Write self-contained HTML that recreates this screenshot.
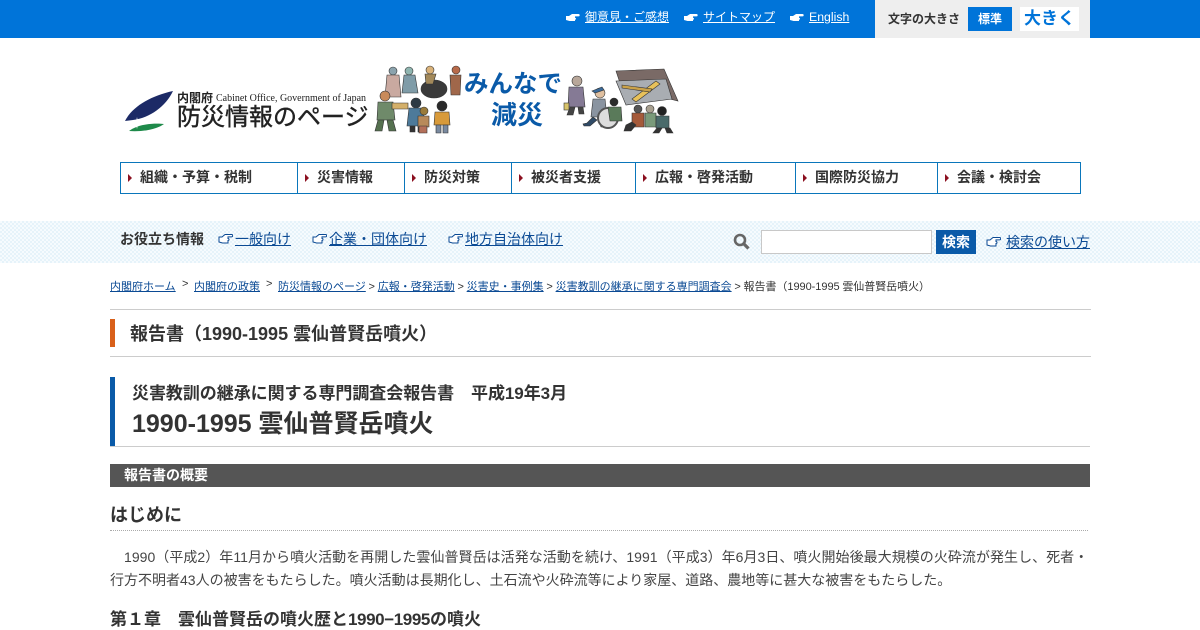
<!DOCTYPE html>
<html lang="ja"><head><meta charset="utf-8"><title>報告書（1990-1995 雲仙普賢岳噴火）</title>
<style>
html,body{margin:0;padding:0;background:#fff}
body{width:1200px;height:630px;overflow:hidden;position:relative;font-family:"Liberation Sans","Noto Sans CJK JP",sans-serif;color:#333}
.a{position:absolute;white-space:nowrap}
a{color:#0b4a94;text-decoration:underline}
.top a{color:#fff;font-size:12px}
.nav{position:absolute;left:120px;top:162px;width:961px;height:32px;box-sizing:border-box;border:1px solid #0a76bb}
.nav div{position:absolute;top:0;height:30px;border-right:1px solid #0a76bb}
.bc{font-size:11px;top:278px;color:#333}
.bc a{color:#0b4a94}
.n{position:absolute;top:169px;font-size:14px;font-weight:bold;color:#333;white-space:nowrap;line-height:17px}
.t{position:absolute;top:174px;width:0;height:0;border-left:4px solid #8c1020;border-top:4px solid transparent;border-bottom:4px solid transparent}
</style></head><body>
<div class="a" style="left:0;top:0;width:1200px;height:38px;background:#0074d9"></div>
<div class="a" style="left:875px;top:0;width:215px;height:38px;background:#eee"></div>
<svg class="a" style="left:565px;top:12px" width="15" height="11" viewBox="0 0 15 11"><path d="M1 4h3l3-2h6.500a1 1 0 0 1 0 2.400H10v1.400a1 1 0 0 1 0 2V9H4.500L1 8z" fill="#fff"/></svg>
<svg class="a" style="left:683px;top:12px" width="15" height="11" viewBox="0 0 15 11"><path d="M1 4h3l3-2h6.500a1 1 0 0 1 0 2.400H10v1.400a1 1 0 0 1 0 2V9H4.500L1 8z" fill="#fff"/></svg>
<svg class="a" style="left:789px;top:12px" width="15" height="11" viewBox="0 0 15 11"><path d="M1 4h3l3-2h6.500a1 1 0 0 1 0 2.400H10v1.400a1 1 0 0 1 0 2V9H4.500L1 8z" fill="#fff"/></svg>
<div class="a top" style="left:585px;top:8px"><a href="#">御意見・ご感想</a></div>
<div class="a top" style="left:703px;top:8px"><a href="#">サイトマップ</a></div>
<div class="a top" style="left:809px;top:8px"><a href="#" style="font-size:12.3px">English</a></div>
<div class="a" style="left:888px;top:10px;font-size:12px;font-weight:bold;color:#333">文字の大きさ</div>
<div class="a" style="left:968px;top:7px;width:44px;height:24px;background:#0074d9;color:#fff;font-size:12px;font-weight:bold;text-align:center;line-height:24px">標準</div>
<div class="a" style="left:1020px;top:7px;width:59px;height:24px;background:#fff;color:#0074d9;font-size:17px;font-weight:bold;text-align:center;line-height:24px">大きく</div>

<svg class="a" style="left:124px;top:90px" width="50" height="42" viewBox="0 0 50 42"><path d="M1 31C8 17 26 6 49 1 42 16 26 28 9 30z" fill="#1c2a66"/><path d="M5 41C14 34 30 33 40 34 32 40 16 42 5 41z" fill="#1e8a4a"/><path d="M13 27l1 5 5 1-5 1-1 5-1-5-5-1 5-1z" fill="#fff"/></svg>
<div class="a" style="left:177px;top:89px;font-size:12px;font-weight:bold;color:#222">内閣府</div>
<div class="a" style="left:216px;top:93px;font-size:10px;font-family:'Liberation Serif',serif;color:#222">Cabinet Office, Government of Japan</div>
<div class="a" style="left:177px;top:103px;font-size:24px;color:#222;line-height:30px;-webkit-text-stroke:.4px #222">防災情報のページ</div>

<svg class="a" style="left:372px;top:65px" width="94" height="70" viewBox="0 0 94 70"><g stroke="#333" stroke-width=".6">
<ellipse cx="62" cy="24" rx="13" ry="9" fill="#3a3a3a"/><circle cx="21" cy="6" r="4" fill="#8ba3ad"/><path d="M15 10h12l2 22H13z" fill="#c9a9a0"/><circle cx="37" cy="6" r="4" fill="#8fb5b0"/><path d="M32 10h11l3 18H30z" fill="#7f9ca8"/><circle cx="58" cy="5" r="4" fill="#d9b27a"/><path d="M53 9h11l-3 10H54z" fill="#a3895a"/><circle cx="84" cy="5" r="4" fill="#b86a4a"/><path d="M78 10h11l-1 20H79z" fill="#a0674a"/>
<circle cx="13" cy="31" r="5" fill="#c88a5a"/><path d="M6 37h15l2 18H5z" fill="#6f8a6a"/><path d="M6 55h6l-2 11H3zM15 55h6l3 11h-7z" fill="#55704f"/><path d="M20 38h16v6H20z" fill="#d4b06a"/>
<circle cx="44" cy="38" r="5" fill="#2c3a44"/><path d="M37 43h14l2 18H35z" fill="#4d7a9a"/><path d="M38 61h5v6h-5zM46 61h5v6h-5z" fill="#333"/>
<circle cx="70" cy="41" r="5" fill="#2a2a2a"/><path d="M63 47h14l1 13H62z" fill="#d89a3a"/><path d="M64 60h5v8h-5zM71 60h5v8h-5z" fill="#7a8aa0"/>
<circle cx="52" cy="46" r="4" fill="#9a7b3a"/><path d="M46 51h11v11H46z" fill="#b88a5a"/><path d="M47 61h8v7h-8z" fill="#b4705a"/></g></svg>
<div class="a" style="left:464px;top:69px;font-size:24.500px;line-height:31px;font-weight:bold;color:#0a5aa8">みんなで</div>
<div class="a" style="left:491px;top:100px;font-size:26px;line-height:31px;font-weight:bold;color:#0a5aa8">減災</div>
<svg class="a" style="left:560px;top:65px" width="120" height="70" viewBox="0 0 120 70"><g stroke="#333" stroke-width=".6">
<path d="M56 6l48-2 14 32-8-2-6-18-44 2z" fill="#7a6a66"/><path d="M56 16l50-2 6 20-46 6z" fill="#a9adb2"/><path d="M72 34l24-18 4 3-24 18z" fill="#e8c15a"/><path d="M62 20l30 4-2 3-28-4z" fill="#caa24a"/>
<circle cx="17" cy="16" r="5" fill="#b8a79a"/><path d="M9 22h14l2 20H8z" fill="#857a95"/><path d="M10 42h5l-2 8H7zM18 42h5l1 7h-5z" fill="#444"/><rect x="4" y="38" width="5" height="7" fill="#d8c46a"/>
<circle cx="40" cy="28" r="5" fill="#e0c0a0"/><path d="M32 26l10-4 2 3-9 3z" fill="#3a6a9a"/><path d="M33 34h12l2 18H31z" fill="#8a94a0"/><path d="M33 52l-6 6-4 1 1 2h6l7-6zM42 52l4 10h-5l-3-8z" fill="#2f4a66"/>
<circle cx="48" cy="53" r="10" fill="#ddd" stroke="#555" stroke-width="2"/><circle cx="54" cy="37" r="4" fill="#2a2a2a"/><path d="M48 42h13l1 14H50z" fill="#5a7a5a"/>
<circle cx="78" cy="44" r="4" fill="#555"/><path d="M72 48h12v14H72z" fill="#a55a3a"/><circle cx="90" cy="44" r="4" fill="#a8a090"/><path d="M85 48h11v14H85z" fill="#7a9a7a"/><circle cx="102" cy="46" r="4.500" fill="#222"/><path d="M96 51h13v12H96z" fill="#4a6a6a"/><path d="M66 60l6-3 4 3-5 6h-7zM97 63h5l-3 5h-6zM105 63h5l3 5h-6z" fill="#333"/></g></svg>

<div class="nav">
<div style="left:0;width:176px"></div>
<div style="left:177px;width:106px"></div>
<div style="left:284px;width:106px"></div>
<div style="left:391px;width:123px"></div>
<div style="left:515px;width:159px"></div>
<div style="left:675px;width:141px"></div>
</div>
<i class="t" style="left:128px"></i><div class="n" style="left:140px">組織・予算・税制</div>
<i class="t" style="left:305px"></i><div class="n" style="left:317px">災害情報</div>
<i class="t" style="left:412px"></i><div class="n" style="left:424px">防災対策</div>
<i class="t" style="left:519px"></i><div class="n" style="left:531px">被災者支援</div>
<i class="t" style="left:643px"></i><div class="n" style="left:655px">広報・啓発活動</div>
<i class="t" style="left:803px"></i><div class="n" style="left:815px">国際防災協力</div>
<i class="t" style="left:945px"></i><div class="n" style="left:957px">会議・検討会</div>

<div class="a" style="left:0;top:221px;width:1200px;height:42px;background-color:#f6fbfe;background-image:conic-gradient(#e6f3fa 25%,#f6fbfe 0 50%,#e6f3fa 0 75%,#f6fbfe 0);background-size:4px 4px"></div>
<div class="a" style="left:120px;top:229px;font-size:14px;font-weight:bold;color:#333">お役立ち情報</div>
<svg class="a" style="left:218px;top:233px" width="15" height="12" viewBox="0 0 15 12"><path d="M1 4h3l3-2.500h6.500a1 1 0 0 1 0 2.400H10v1.600a1 1 0 0 1 0 2V10H4.500L1 9z" fill="#fff" stroke="#0b4a94"/></svg>
<div class="a" style="left:235px;top:229px;font-size:14px"><a href="#">一般向け</a></div>
<svg class="a" style="left:312px;top:233px" width="15" height="12" viewBox="0 0 15 12"><path d="M1 4h3l3-2.500h6.500a1 1 0 0 1 0 2.400H10v1.600a1 1 0 0 1 0 2V10H4.500L1 9z" fill="#fff" stroke="#0b4a94"/></svg>
<div class="a" style="left:329px;top:229px;font-size:14px"><a href="#">企業・団体向け</a></div>
<svg class="a" style="left:448px;top:233px" width="15" height="12" viewBox="0 0 15 12"><path d="M1 4h3l3-2.500h6.500a1 1 0 0 1 0 2.400H10v1.600a1 1 0 0 1 0 2V10H4.500L1 9z" fill="#fff" stroke="#0b4a94"/></svg>
<div class="a" style="left:465px;top:229px;font-size:14px"><a href="#">地方自治体向け</a></div>
<svg class="a" style="left:733px;top:233px" width="17" height="17" viewBox="0 0 17 17"><circle cx="7" cy="7" r="5" fill="none" stroke="#666" stroke-width="2.600"/><path d="M10.500 10.500l5 5" stroke="#666" stroke-width="3.200"/></svg>
<div class="a" style="left:761px;top:230px;width:171px;height:24px;box-sizing:border-box;background:#fff;border:1px solid #c8c8c8"></div>
<div class="a" style="left:936px;top:230px;width:40px;height:24px;background:#0a5aa8;color:#fff;font-size:14px;font-weight:bold;text-align:center;line-height:25px">検索</div>
<svg class="a" style="left:986px;top:236px" width="15" height="12" viewBox="0 0 15 12"><path d="M1 4h3l3-2.500h6.500a1 1 0 0 1 0 2.400H10v1.600a1 1 0 0 1 0 2V10H4.500L1 9z" fill="#fff" stroke="#0b4a94"/></svg>
<div class="a" style="left:1006px;top:232px;font-size:14px"><a href="#">検索の使い方</a></div>

<div class="a bc" style="left:110px"><a href="#">内閣府ホーム</a></div>
<div class="a bc" style="left:182px">&gt;</div>
<div class="a bc" style="left:194px"><a href="#">内閣府の政策</a></div>
<div class="a bc" style="left:266px">&gt;</div>
<div class="a bc" style="left:278px;word-spacing:-.3px"><a href="#">防災情報のページ</a> &gt; <a href="#">広報・啓発活動</a> &gt; <a href="#">災害史・事例集</a> &gt; <a href="#">災害教訓の継承に関する専門調査会</a> &gt; <span style="letter-spacing:-.04px">報告書（1990-1995 雲仙普賢岳噴火）</span></div>

<div class="a" style="left:110px;top:309px;width:981px;height:1px;background:#ccc"></div>
<div class="a" style="left:110px;top:319px;width:5px;height:28px;background:#d9601a"></div>
<div class="a" style="left:130px;top:320px;font-size:18px;font-weight:bold;color:#333">報告書（1990-1995 雲仙普賢岳噴火）</div>
<div class="a" style="left:110px;top:356px;width:981px;height:1px;background:#ccc"></div>

<div class="a" style="left:110px;top:377px;width:5px;height:69px;background:#0a5aa8"></div>
<div class="a" style="left:110px;top:446px;width:980px;height:1px;background:#ccc"></div>
<div class="a" style="left:132px;top:379px;font-size:17px;font-weight:bold;color:#333;letter-spacing:-.05px">災害教訓の継承に関する専門調査会報告書　平成19年3月</div>
<div class="a" style="left:132px;top:404px;font-size:25px;font-weight:bold;color:#333">1990-1995 雲仙普賢岳噴火</div>

<div class="a" style="left:110px;top:464px;width:980px;height:23px;background:#555"></div>
<div class="a" style="left:124px;top:465px;font-size:14px;font-weight:bold;color:#fff">報告書の概要</div>

<div class="a" style="left:110px;top:501px;font-size:18px;font-weight:bold;color:#333">はじめに</div>
<div class="a" style="left:110px;top:530px;width:978px;height:0;border-top:1px dotted #aaa"></div>
<div class="a" style="left:124px;top:547px;font-size:14px;color:#444;letter-spacing:.04px">1990（平成2）年11月から噴火活動を再開した雲仙普賢岳は活発な活動を続け、1991（平成3）年6月3日、噴火開始後最大規模の火砕流が発生し、死者・</div>
<div class="a" style="left:110px;top:570px;font-size:14px;color:#444">行方不明者43人の被害をもたらした。噴火活動は長期化し、土石流や火砕流等により家屋、道路、農地等に甚大な被害をもたらした。</div>
<div class="a" style="left:110px;top:605px;font-size:17px;font-weight:bold;color:#333">第１章　雲仙普賢岳の噴火歴と<span style="letter-spacing:-.4px">1990−1995</span>の噴火</div>
</body></html>
